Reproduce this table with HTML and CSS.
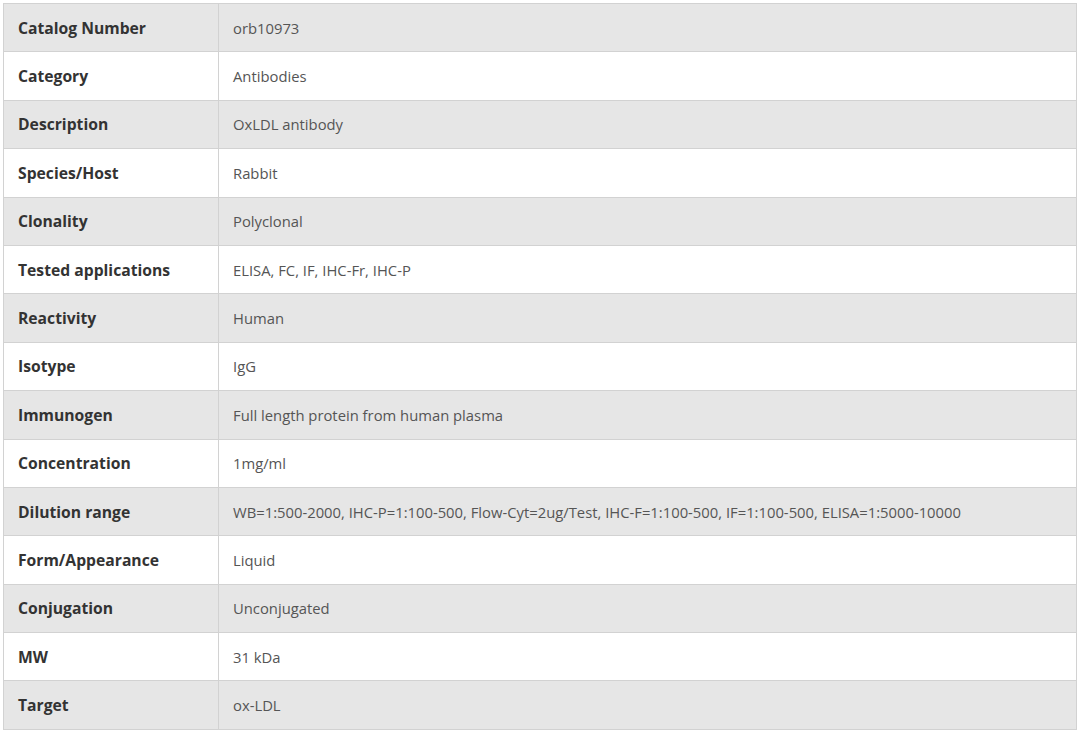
FILE: index.html
```html
<!DOCTYPE html>
<html>
<head>
<meta charset="utf-8">
<link rel="stylesheet" href="styles.css">
</head>
<body>
<table class="spec">
<tbody>
<tr class="alt"><th>Catalog Number</th><td>orb10973</td></tr>
<tr><th>Category</th><td>Antibodies</td></tr>
<tr class="alt"><th>Description</th><td>OxLDL antibody</td></tr>
<tr><th>Species/Host</th><td>Rabbit</td></tr>
<tr class="alt"><th>Clonality</th><td>Polyclonal</td></tr>
<tr><th>Tested applications</th><td>ELISA, FC, IF, IHC-Fr, IHC-P</td></tr>
<tr class="alt"><th>Reactivity</th><td>Human</td></tr>
<tr><th>Isotype</th><td>IgG</td></tr>
<tr class="alt"><th>Immunogen</th><td>Full length protein from human plasma</td></tr>
<tr><th>Concentration</th><td>1mg/ml</td></tr>
<tr class="alt"><th>Dilution range</th><td>WB=1:500-2000, IHC-P=1:100-500, Flow-Cyt=2ug/Test, IHC-F=1:100-500, IF=1:100-500, ELISA=1:5000-10000</td></tr>
<tr><th>Form/Appearance</th><td>Liquid</td></tr>
<tr class="alt"><th>Conjugation</th><td>Unconjugated</td></tr>
<tr><th>MW</th><td>31 kDa</td></tr>
<tr class="alt"><th>Target</th><td>ox-LDL</td></tr>
</tbody>
</table>
</body>
</html>
```
FILE: styles.css
```css
html, body {
  margin: 0;
  padding: 0;
  background: #ffffff;
}
body {
  padding: 3px 3px 0 3px;
  font-family: "Open Sans", "Liberation Sans", sans-serif;
}
.spec {
  width: 1074px;
  border-collapse: collapse;
  border: 1px solid #d2d2d2;
}
.spec th, .spec td {
  border: 1px solid #d2d2d2;
  height: 48.4px;
  box-sizing: border-box;
  padding: 0 14px;
  text-align: left;
  vertical-align: middle;
}
.spec th {
  width: 215px;
  font-weight: 700;
  font-size: 15.7px;
  color: #333333;
}
.spec td {
  font-size: 14.8px;
  color: #555555;
}
.spec tr.alt th, .spec tr.alt td {
  background: #e6e6e6;
}
```
